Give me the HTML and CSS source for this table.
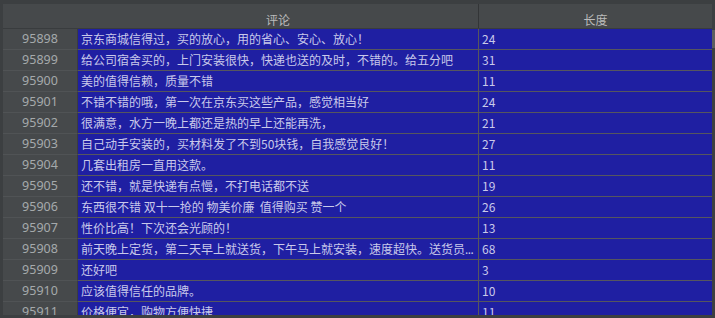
FILE: index.html
```html
<!DOCTYPE html>
<html lang="zh">
<head>
<meta charset="utf-8">
<link rel="stylesheet" href="styles.css">
</head>
<body>
<div class="frame">
  <div class="table">
    <div class="head">
      <div class="hc idx"></div>
      <div class="hc comment">评论</div>
      <div class="hc len">长度</div>
    </div>
    <div class="body">
      <div class="row"><div class="idx">95898</div><div class="c comment">京东商城信得过，买的放心，用的省心、安心、放心！</div><div class="c len">24</div></div>
      <div class="row"><div class="idx">95899</div><div class="c comment">给公司宿舍买的，上门安装很快，快递也送的及时，不错的。给五分吧</div><div class="c len">31</div></div>
      <div class="row"><div class="idx">95900</div><div class="c comment">美的值得信赖，质量不错</div><div class="c len">11</div></div>
      <div class="row"><div class="idx">95901</div><div class="c comment">不错不错的哦，第一次在京东买这些产品，感觉相当好</div><div class="c len">24</div></div>
      <div class="row"><div class="idx">95902</div><div class="c comment">很满意，水方一晚上都还是热的早上还能再洗，</div><div class="c len">21</div></div>
      <div class="row"><div class="idx">95903</div><div class="c comment">自己动手安装的，买材料发了不到50块钱，自我感觉良好！</div><div class="c len">27</div></div>
      <div class="row"><div class="idx">95904</div><div class="c comment">几套出租房一直用这款。</div><div class="c len">11</div></div>
      <div class="row"><div class="idx">95905</div><div class="c comment">还不错，就是快递有点慢，不打电话都不送</div><div class="c len">19</div></div>
      <div class="row"><div class="idx">95906</div><div class="c comment">东西很不错 双十一抢的 物美价廉&nbsp;&nbsp;值得购买 赞一个</div><div class="c len">26</div></div>
      <div class="row"><div class="idx">95907</div><div class="c comment">性价比高！下次还会光顾的！</div><div class="c len">13</div></div>
      <div class="row"><div class="idx">95908</div><div class="c comment">前天晚上定货，第二天早上就送货，下午马上就安装，速度超快。送货员<span class="dots">...</span></div><div class="c len">68</div></div>
      <div class="row"><div class="idx">95909</div><div class="c comment">还好吧</div><div class="c len">3</div></div>
      <div class="row"><div class="idx">95910</div><div class="c comment">应该值得信任的品牌。</div><div class="c len">10</div></div>
      <div class="row"><div class="idx">95911</div><div class="c comment">价格便宜，购物方便快捷</div><div class="c len">11</div></div>
    </div>
  </div>
  <div class="scroll"><div class="thumb"></div></div>
</div>
</body>
</html>
```
FILE: styles.css
```css
html, body {
  margin: 0;
  padding: 0;
  background: #3c3f41;
  width: 715px;
  height: 318px;
  overflow: hidden;
}
.frame {
  display: flex;
  padding: 4px 0 0 3px;
  height: 311px;
}
.table {
  width: 709px;
  display: flex;
  flex-direction: column;
  overflow: hidden;
}
.head {
  display: flex;
  height: 24px;
  background: #46494b;
  border-bottom: 1px solid #393c3e;
  flex: none;
}
.hc {
  color: #bbbbbb;
  font: 12px "Noto Sans CJK SC", "Noto Sans", sans-serif;
  text-align: center;
  line-height: 17px;
  padding-top: 7px;
  box-sizing: border-box;
  height: 24px;
}
.hc.idx { width: 75px; }
.hc.comment { width: 401px; border-right: 1px solid #333537; }
.hc.len { width: 233px; }
.body {
  flex: 1;
  overflow: hidden;
}
.row {
  display: flex;
  height: 21px;
}
.row .idx {
  width: 74px;
  height: 20px;
  border-right: 1px solid #3a3d3f;
  border-bottom: 1px solid #505355;
  background: #46494b;
  color: #a5a9ab;
  font: 12.5px "Noto Sans", sans-serif;
  line-height: 20px;
  text-align: center;
  flex: none;
}
.c {
  background: #1f1fa2;
  color: #c9c9ea;
  font: 12px "Noto Sans CJK SC", "Noto Sans", sans-serif;
  line-height: 20px;
  height: 20px;
  border-bottom: 1px solid #56565e;
  padding-left: 3px;
  box-sizing: content-box;
  white-space: nowrap;
  overflow: hidden;
  flex: none;
}
.dots {
  font-family: "Noto Sans", sans-serif;
  letter-spacing: -0.5px;
}
.c.comment {
  width: 397px;
  border-right: 1px solid #56565e;
}
.c.len {
  width: 230px;
}
.scroll {
  width: 3px;
  background: #3c3f41;
  padding-top: 26px;
}
.thumb {
  width: 3px;
  height: 18px;
  background: #5b5e60;
}
```
